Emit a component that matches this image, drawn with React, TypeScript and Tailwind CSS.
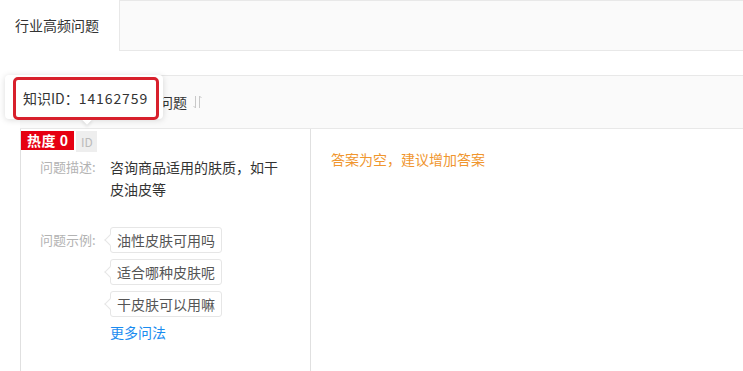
import React from 'react';

const examples = ['油性皮肤可用吗', '适合哪种皮肤呢', '干皮肤可以用嘛'];

function SortIcon() {
  return (
    <svg width="9" height="14" viewBox="0 0 9 14" fill="none" stroke="#c8c8c8" strokeWidth="1">
      <path d="M2.5 1v12l-2-2" />
      <path d="M6.5 13V1l2 2" />
    </svg>
  );
}

export default function App() {
  return (
    <div
      className="relative w-[743px] h-[371px] overflow-hidden bg-white text-[#333]"
      style={{ fontFamily: '"Noto Sans CJK SC", "Noto Sans", sans-serif' }}
    >
      {/* TAB BAR */}
      <div className="flex h-[51px]">
        <div className="w-[120px] flex items-center pl-[15px] text-[14px] text-[#333] border-r border-[#e8e8e8] bg-white">
          行业高频问题
        </div>
        <div className="flex-1 bg-[#fafafa] border-t border-b border-[#e8e8e8]"></div>
      </div>

      {/* TABLE */}
      <div className="mt-[24px] ml-[20px]">
        <div className="flex h-[54px] bg-[#fafafa] border-t border-b border-[#e8e8e8]">
          <div className="w-[290px] flex items-center gap-[6px] pl-[139px] text-[14px] text-[#333]">
            <span>问题</span>
            <SortIcon />
          </div>
        </div>

        <div className="flex h-[300px]">
          {/* question column */}
          <div className="w-[291px] border-l border-r border-[#e0e0e0] pt-[2px]">
            <div className="flex items-start gap-[2px]">
              <span className="h-[19px] px-[6px] bg-[#e60012] text-white text-[14px] font-semibold leading-[19px] tracking-[0.5px]">热度 0</span>
              <span className="h-[21px] w-[21px] bg-[#eeeeee] text-[#bbb] text-[12px] leading-[21px] text-center">ID</span>
            </div>

            <div className="flex mt-[4px] pl-[19px] text-[14px] leading-[22px]">
              <span className="w-[70px] text-[13px] text-[#b3b3b3]">问题描述:</span>
              <span className="w-[175px] text-[#333]">咨询商品适用的肤质，如干皮油皮等</span>
            </div>

            <div className="flex mt-[27px] pl-[19px]">
              <span className="w-[70px] text-[13px] text-[#b3b3b3] leading-[22px] mt-[2px]">问题示例:</span>
              <div className="flex flex-col">
                <div className="flex flex-col gap-[6px]">
                  {examples.map((q) => (
                    <div key={q} className="relative h-[26px] w-[112px] border border-[#e6e6e6] rounded-[3px] bg-white px-[6px] text-[14px] leading-[24px] text-[#555]">
                      <span className="absolute left-[-5px] top-[8px] w-[8px] h-[8px] rotate-45 bg-white border-l border-b border-[#e6e6e6]"></span>
                      {q}
                    </div>
                  ))}
                </div>
                <span className="text-[14px] leading-[22px] text-[#1a8cf0] mt-[4px]">更多问法</span>
              </div>
            </div>
          </div>

          {/* answer column */}
          <div className="flex-1 pl-[20px] pt-[17px]">
            <span className="text-[14px] leading-[22px] text-[#f0962e]">答案为空，建议增加答案</span>
          </div>
        </div>
      </div>

      {/* TOOLTIP */}
      <div className="absolute left-[5px] top-[75px] w-[158px] h-[44px] bg-white rounded-[4px] shadow-[0_1px_6px_rgba(0,0,0,0.15)]">
        <span className="absolute left-[78px] bottom-[-4px] w-[8px] h-[8px] rotate-45 bg-white shadow-[2px_2px_3px_rgba(0,0,0,0.08)]"></span>
      </div>
      <div className="absolute left-[13px] top-[77px] w-[146px] h-[43px] border-[3px] border-[#d8202c] rounded-[5px] flex items-center pl-[7px] text-[14px] text-[#333]">
        知识ID：<span className="tracking-[0.9px]">14162759</span>
      </div>
    </div>
  );
}
